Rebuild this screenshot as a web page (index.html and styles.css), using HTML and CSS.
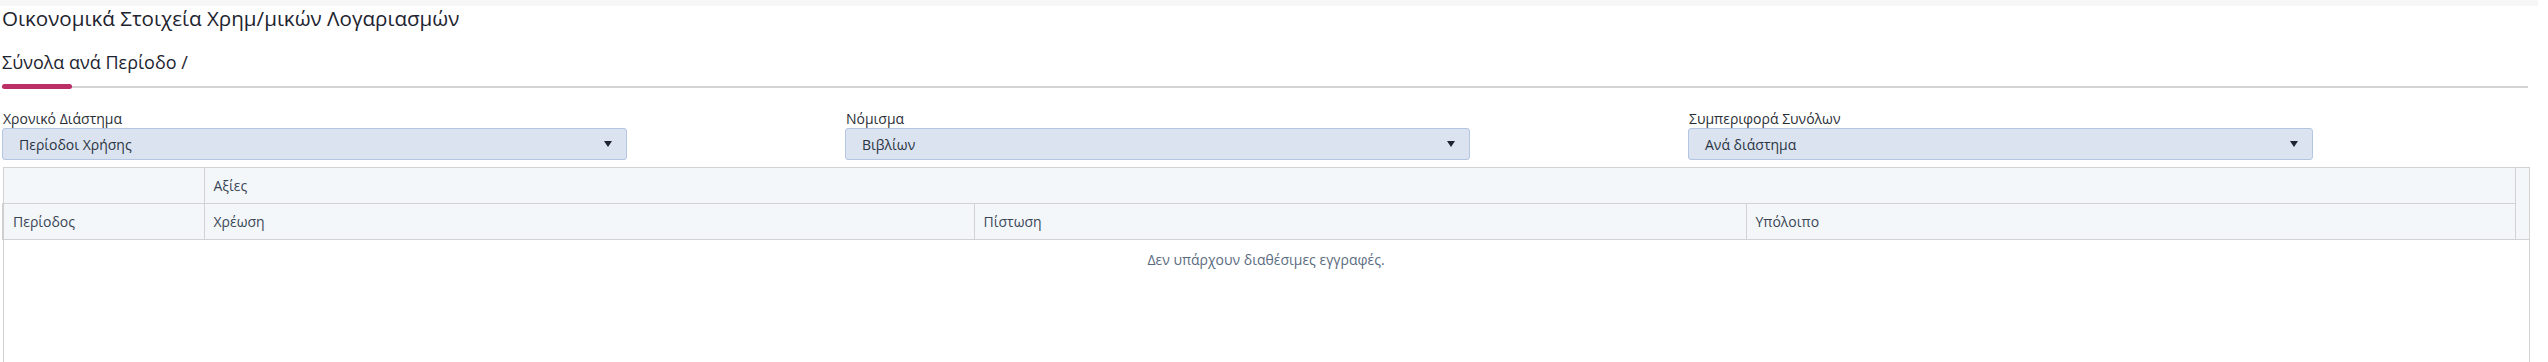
FILE: index.html
```html
<!DOCTYPE html>
<html lang="el">
<head>
<meta charset="utf-8">
<title>Οικονομικά Στοιχεία</title>
<link rel="stylesheet" href="styles.css">
</head>
<body>
<div class="page">
  <h1 class="title">Οικονομικά Στοιχεία Χρημ/μικών Λογαριασμών</h1>
  <div class="tabs">
    <div class="tab">Σύνολα ανά Περίοδο /</div>
    <div class="tabline"><span class="tabactive"></span></div>
  </div>
  <div class="filters">
    <div class="field">
      <label class="flabel">Χρονικό Διάστημα</label>
      <div class="select"><span>Περίοδοι Χρήσης</span><span class="caret"></span></div>
    </div>
    <div class="field">
      <label class="flabel">Νόμισμα</label>
      <div class="select"><span>Βιβλίων</span><span class="caret"></span></div>
    </div>
    <div class="field">
      <label class="flabel">Συμπεριφορά Συνόλων</label>
      <div class="select"><span>Ανά διάστημα</span><span class="caret"></span></div>
    </div>
  </div>
  <div class="grid">
    <table class="gtable">
      <colgroup>
        <col class="c-period"><col class="c-val"><col class="c-val2"><col class="c-val3"><col class="c-gutter">
      </colgroup>
      <thead>
        <tr><th></th><th colspan="3">Αξίες</th><th class="gutter" rowspan="2"></th></tr>
        <tr><th class="first">Περίοδος</th><th>Χρέωση</th><th>Πίστωση</th><th>Υπόλοιπο</th></tr>
      </thead>
      <tbody>
        <tr><td class="empty" colspan="5">Δεν υπάρχουν διαθέσιμες εγγραφές.</td></tr>
      </tbody>
    </table>
  </div>
</div>
</body>
</html>
```
FILE: styles.css
```css
html, body {
  margin: 0;
  padding: 0;
  overflow: hidden;
}
body {
  background: #ffffff linear-gradient(#f7f7f8, #f7f7f8) no-repeat 0 0 / calc(100% - 10px) 6px;
  font-family: "Open Sans", "Noto Sans", sans-serif;
  color: #222a35;
}
.page {
  padding: 0 20px 0 2px;
}
.title {
  margin: 4px 0 0 0;
  font-size: 20.6px;
  line-height: 28px;
  font-weight: 400;
  color: #1d2430;
}
.tabs {
  margin-top: 18px;
}
.tab {
  font-size: 18px;
  line-height: 24px;
  color: #1d2430;
}
.tabline {
  margin-top: 12px;
  height: 2px;
  background: #d4d4d4;
  position: relative;
}
.tabactive {
  position: absolute;
  left: 0;
  top: -2px;
  width: 70px;
  height: 5px;
  border-radius: 3px;
  background: #bb2e66;
}
.filters {
  display: grid;
  grid-template-columns: repeat(3, 843px);
  margin-top: 22px;
}
.field {
  display: flex;
  flex-direction: column;
}
.flabel {
  font-size: 14px;
  line-height: 18px;
  color: #2a2f36;
  padding-left: 1px;
}
.select {
  box-sizing: border-box;
  width: 625px;
  height: 32px;
  border: 1px solid #b4c6e0;
  border-radius: 3px;
  background: #dae3ef;
  display: flex;
  align-items: center;
  justify-content: space-between;
  padding: 0 14px 0 16px;
  font-size: 14px;
  color: #2a3442;
}
.caret {
  width: 0;
  height: 0;
  border-left: 4px solid transparent;
  border-right: 4px solid transparent;
  border-top: 6px solid #1e2530;
}
.grid {
  margin-top: 7px;
}
.gtable {
  width: 2526px;
  border-collapse: collapse;
  table-layout: fixed;
  border: 1px solid #d2d2d2;
}
.c-period { width: 201px; }
.c-val { width: 770px; }
.c-val2 { width: 772px; }
.c-val3 { width: 769px; }
.c-gutter { width: 14px; }
.gtable th {
  height: 35px;
  padding: 0 9px;
  background: #f3f7fa;
  border: 1px solid #d2d2d2;
  text-align: left;
  font-weight: 400;
  font-size: 14px;
  color: #3a4656;
}
.gtable th.first {
  border-left: 2px solid #cfcfcf;
}
.gtable th.gutter {
  padding: 0;
}
.gtable td.empty {
  height: 128px;
  vertical-align: top;
  text-align: center;
  padding: 10px 0 0 0;
  font-size: 14px;
  line-height: 20px;
  color: #5b6b80;
}
```
